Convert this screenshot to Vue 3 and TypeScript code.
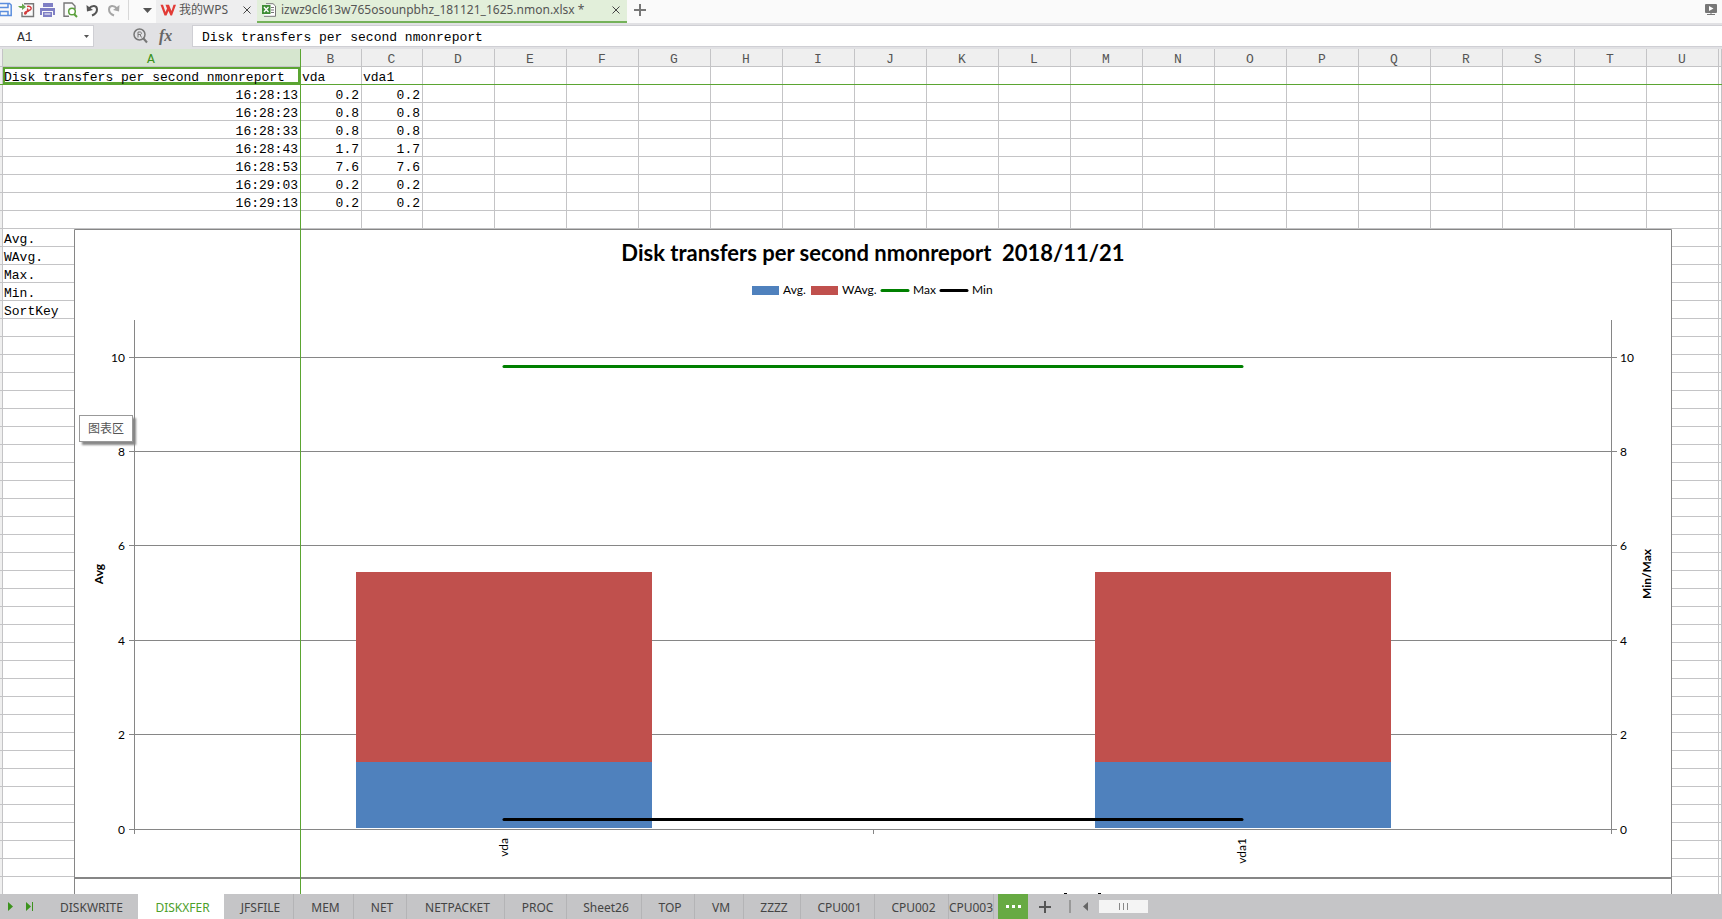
<script setup lang="ts">
import { ref } from 'vue'

type Row = string[]

const columns = 'ABCDEFGHIJKLMNOPQRSTU'.split('')
const title = 'Disk transfers per second nmonreport'
const formula = ref(title)
const cellName = ref('A1')

const data: Row[] = [
  [title, 'vda', 'vda1'],
  ['16:28:13', '0.2', '0.2'],
  ['16:28:23', '0.8', '0.8'],
  ['16:28:33', '0.8', '0.8'],
  ['16:28:43', '1.7', '1.7'],
  ['16:28:53', '7.6', '7.6'],
  ['16:29:03', '0.2', '0.2'],
  ['16:29:13', '0.2', '0.2'],
  [],
  ['Avg.'],
  ['WAvg.'],
  ['Max.'],
  ['Min.'],
  ['SortKey'],
]
const rows: Row[] = Array.from({ length: 46 }, (_, i) => data[i] ?? [])
const isNumber = (text: string | undefined) => !!text && /^\d/.test(text)

const sheets = ['DISKWRITE', 'DISKXFER', 'JFSFILE', 'MEM', 'NET', 'NETPACKET', 'PROC', 'Sheet26', 'TOP', 'VM', 'ZZZZ', 'CPU001', 'CPU002', 'CPU003']
const activeSheet = ref('DISKXFER')

// Value axis geometry inside the chart drawing
const ticks = [
  { value: 10, y: 128 },
  { value: 8, y: 222 },
  { value: 6, y: 316 },
  { value: 4, y: 411 },
  { value: 2, y: 505 },
  { value: 0, y: 600 },
]
const bars = [282, 1021]
</script>

<template>
  <div class="app">
    <header class="top">
      <div class="quick">
        <button aria-label="Save">
          <svg width="12" height="16" viewBox="0 0 12 16"><path d="M0 1.500H9.500L11.200 3V13.500H0M0 5.500H8V1.500M0 13V9.500H8V13" fill="none" stroke="#5b8ede" stroke-width="1.500" /></svg>
        </button>
        <button aria-label="Export PDF">
          <svg width="18" height="16" viewBox="0 0 18 16"><path d="M6 1.700H15.500V14.500H4V10" fill="none" stroke="#777" stroke-width="1.400" /><path d="M0 4H4V1.500L8 5L4 8V6H2Z" fill="#6aa84f" /><path d="M9 4.500C13 3.500 15 7 11 8.500C9 9.200 10 5 9.500 8C9 11 7 13 6.700 11.500C6.500 10 9 9 11 9" fill="none" stroke="#d23c3c" stroke-width="1.400" /></svg>
        </button>
        <button aria-label="Print">
          <svg width="16" height="16" viewBox="0 0 16 16"><path d="M3 1H13V5H3ZM0 6H15V13H13V9H2V13H0ZM3 10H12V15H3Z" fill="#7f7fc4" /><path d="M4.500 12H10.500" stroke="#fff" /></svg>
        </button>
        <button aria-label="Print preview">
          <svg width="15" height="16" viewBox="0 0 15 16"><path d="M6 14.300H1V1H9L12 4V7" fill="none" stroke="#777" stroke-width="1.400" /><circle cx="9" cy="9.500" r="3.300" fill="#fff" stroke="#5ba03c" stroke-width="1.500" /><path d="M11 12L14 15" stroke="#5ba03c" stroke-width="2" /></svg>
        </button>
        <button aria-label="Undo">
          <svg width="13" height="14" viewBox="0 0 13 14"><path d="M3 5.500C6 2 11 2 11 6.500C11 9.500 8.500 11.500 6 12.500" fill="none" stroke="#555" stroke-width="2" /><path d="M0.500 2L1 8.500L7 7Z" fill="#555" /></svg>
        </button>
        <button aria-label="Redo">
          <svg width="13" height="14" viewBox="0 0 13 14"><path d="M10 5.500C7 2 2 2 2 6.500C2 9.500 4.500 11.500 7 12.500" fill="none" stroke="#a6a6a6" stroke-width="2" /><path d="M12.500 2L12 8.500L6 7Z" fill="#a6a6a6" /></svg>
        </button>
        <span class="rule"></span>
        <button aria-label="Customize toolbar">
          <svg width="9" height="5" viewBox="0 0 9 5"><path d="M0 0H9L4.500 5Z" fill="#555" /></svg>
        </button>
      </div>
      <nav class="files" aria-label="Open files">
        <div class="file home">
          <svg width="16" height="12" viewBox="0 0 16 12"><path d="M0.500 0.800H3L5.500 8L7 4.500L5.500 0.800H9L11.500 7L13.500 0.800H16L12 11.500H10.500L8.500 7L6.500 11.500H4.500Z" fill="#e23b36" /></svg>
          <a href="#home">我的WPS</a>
          <button aria-label="Close 我的WPS"><svg width="8" height="8" viewBox="0 0 8 8"><path d="M0.500 0.500L7.500 7.500M7.500 0.500L0.500 7.500" stroke="#444" /></svg></button>
        </div>
        <div class="file current">
          <svg width="15" height="14" viewBox="0 0 15 14"><path d="M4 0.700H11L13.500 3V13.300H2" fill="#fff" stroke="#777" /><path d="M9 4.500H12M9 7H12M9 9.500H12" stroke="#777" /><rect y="2" width="8.500" height="9" fill="#3f8e35" /><path d="M2 4L6.500 9M6.500 4L2 9" stroke="#fff" stroke-width="1.300" /></svg>
          <a href="#file">izwz9cl613w765osounpbhz_181121_1625.nmon.xlsx *</a>
          <button aria-label="Close file"><svg width="8" height="8" viewBox="0 0 8 8"><path d="M0.500 0.500L7.500 7.500M7.500 0.500L0.500 7.500" stroke="#444" /></svg></button>
        </div>
        <button class="new" aria-label="New file"><svg width="12" height="12" viewBox="0 0 12 12"><path d="M6 0V12M0 6H12" stroke="#777" stroke-width="2" /></svg></button>
      </nav>
      <button class="present" aria-label="Present">
        <svg width="12" height="11" viewBox="0 0 12 11"><rect width="12" height="9" rx="1" fill="#777" /><path d="M4 2L8.500 4.500L4 7Z" fill="#fff" /><path d="M6 9V10M2 10.500H10" stroke="#777" /></svg>
      </button>
    </header>

    <div class="formula-bar">
      <div class="name-box">
        <input v-model="cellName" aria-label="Name box" />
        <button aria-label="Choose name"><svg width="5" height="3" viewBox="0 0 5 3"><path d="M0 0H5L2.500 3Z" fill="#555" /></svg></button>
      </div>
      <div class="tools">
        <button aria-label="Look up">
          <svg width="16" height="16" viewBox="0 0 16 16"><circle cx="6.500" cy="6.500" r="5.500" fill="none" stroke="#777" stroke-width="1.500" /><path d="M10.500 10.500L14 14.500" stroke="#777" stroke-width="2" /><path d="M5 9.500V4H7C9 4 9 6.500 7 6.500H5M7 6.500L8.500 9.500" fill="none" stroke="#777" /></svg>
        </button>
        <button class="fx" aria-label="Insert function">fx</button>
      </div>
      <input v-model="formula" class="formula" aria-label="Formula" />
    </div>

    <main class="sheet">
      <table>
        <colgroup>
          <col class="c-stub" />
          <col class="c-a" />
          <col class="c-b" />
          <col class="c-b" />
          <col v-for="c in columns.slice(3)" :key="c" class="c-d" />
          <col />
        </colgroup>
        <thead>
          <tr>
            <th></th>
            <th v-for="c in columns" :key="c" scope="col" :class="{ picked: c === 'A' }">{{ c }}</th>
            <th></th>
          </tr>
        </thead>
        <tbody>
          <tr v-for="(row, r) in rows" :key="r">
            <td class="stub"></td>
            <td v-for="(c, i) in columns" :key="c" :class="{ num: isNumber(row[i]), active: r === 0 && i === 0 }">{{ row[i] }}</td>
            <td></td>
          </tr>
        </tbody>
      </table>

      <svg class="chart" width="1598" height="665" viewBox="0 0 1598 665" role="img" aria-label="Disk transfers chart">
        <rect width="1598" height="665" fill="#fff" />
        <path d="M0.500 665V0.500H1597.500V665" class="line" />
        <path d="M0 649H1598" class="line edge" />
        <text x="799" y="32" class="title">Disk transfers per second nmonreport&nbsp; 2018/11/21</text>

        <rect x="678" y="57" width="27" height="9" fill="#4f81bd" />
        <text x="709" y="65">Avg.</text>
        <rect x="737" y="57" width="27" height="9" fill="#c0504d" />
        <text x="768" y="65">WAvg.</text>
        <path d="M808 61.500H834" class="max" />
        <text x="839" y="65">Max</text>
        <path d="M867 61.500H893" class="min" />
        <text x="898" y="65">Min</text>

        <g v-for="t in ticks" :key="t.value">
          <path :d="`M55 ${t.y}.5H1543`" class="line" />
          <text x="51" :y="t.y + 5" class="end">{{ t.value }}</text>
          <text x="1546" :y="t.y + 5">{{ t.value }}</text>
        </g>
        <path d="M60.500 91V605M1537.500 91V605M799.500 600V605" class="line" />
        <g v-for="x in bars" :key="x">
          <rect :x="x" y="343" width="296" height="190" fill="#c0504d" />
          <rect :x="x" y="533" width="296" height="66" fill="#4f81bd" />
        </g>
        <path d="M430 137.500H1168" class="max" />
        <path d="M430 590.500H1168" class="min" />
        <text transform="translate(434 609) rotate(-90)" class="end">vda</text>
        <text transform="translate(1172 609) rotate(-90)" class="end">vda1</text>
        <text transform="translate(29 345) rotate(-90)" class="axis">Avg</text>
        <text transform="translate(1577 345) rotate(-90)" class="axis">Min/Max</text>
        <path d="M990 664.500H993M1024 664.500H1027" stroke="#000" />
      </svg>
      <div class="freeze-x"></div>
      <div class="freeze-y"></div>
      <div class="tip" role="tooltip">图表区</div>
    </main>

    <footer class="bottom">
      <div class="steps">
        <button aria-label="Next sheet"><svg width="5" height="9" viewBox="0 0 5 9"><path d="M0 0L5 4.500L0 9Z" fill="#3c931d" /></svg></button>
        <button aria-label="Last sheet"><svg width="8" height="9" viewBox="0 0 8 9"><path d="M0 0L5 4.500L0 9ZM6 0H7V9H6Z" fill="#3c931d" /></svg></button>
      </div>
      <div class="sheets" role="tablist">
        <button v-for="s in sheets" :key="s" role="tab" :aria-selected="s === activeSheet" :class="{ on: s === activeSheet }" @click="activeSheet = s">{{ s }}</button>
      </div>
      <button class="more" aria-label="More sheets"><i></i><i></i><i></i></button>
      <button class="add" aria-label="Add sheet"><svg width="12" height="12" viewBox="0 0 12 12"><path d="M6 0V12M0 6H12" stroke="#555" stroke-width="2" /></svg></button>
      <span class="split"></span>
      <button class="back" aria-label="Scroll left"><svg width="5" height="9" viewBox="0 0 5 9"><path d="M5 0L0 4.500L5 9Z" fill="#666" /></svg></button>
      <div class="thumb"><i></i><i></i><i></i></div>
    </footer>
  </div>
</template>

<style>
body {
  margin: 0;
}
</style>

<style scoped>
.app {
  display: flex;
  flex-direction: column;
  height: 100vh;
  overflow: hidden;
  background: #fff;
  font-family: 'Noto Sans', 'Noto Sans CJK SC', sans-serif;
  font-size: 12px;
  color: #444;
}
button {
  display: flex;
  align-items: center;
  justify-content: center;
  margin: 0;
  padding: 0;
  border: 0;
  background: none;
  font: inherit;
  color: inherit;
}
input {
  min-width: 0;
  box-sizing: border-box;
  border: 0;
  padding: 2px 0 0;
  outline: 0;
  background: none;
  font: 13px 'Liberation Mono', monospace;
  color: #000;
}
svg {
  display: block;
  flex: none;
}
.top {
  display: flex;
  height: 23px;
  flex: none;
  background: #fafafa;
}
.quick {
  display: grid;
  grid-template-columns: 18px 22px 23px 23px 21px 21px 11px 17px;
  align-items: center;
  justify-items: start;
  flex: none;
  padding-bottom: 3px;
}
.quick button:last-child {
  justify-self: center;
}
.rule {
  width: 1px;
  height: 20px;
  background: #d8d8d8;
}
.files {
  display: flex;
  flex: 1;
}
.file {
  display: flex;
  align-items: center;
  box-sizing: border-box;
  padding-bottom: 3px;
}
.file a {
  flex: 1;
  color: #555;
  text-decoration: none;
  white-space: nowrap;
  line-height: 18px;
}
.home {
  width: 101px;
  gap: 3px;
  padding-left: 4px;
  padding-right: 6px;
  background: #eeeeef;
}
.current {
  width: 370px;
  gap: 4px;
  padding: 0 7px 1px 5px;
  border-bottom: 2px solid #75b25a;
  background: #e2efda;
}
.new {
  width: 26px;
  padding-bottom: 3px;
}
.present {
  width: 34px;
  padding-bottom: 4px;
  padding-left: 12px;
  box-sizing: border-box;
}
.formula-bar {
  display: flex;
  flex: none;
  height: 26px;
  box-sizing: border-box;
  padding: 2px 0;
  background: #e1e1e4;
}
.name-box {
  display: flex;
  width: 94px;
  box-sizing: border-box;
  padding: 0 4px 0 17px;
  border: 1px solid #cfcfd4;
  border-left: 0;
  background: #fff;
}
.name-box input {
  flex: 1;
  color: #333;
}
.tools {
  display: flex;
  width: 98px;
  box-sizing: border-box;
  padding-left: 39px;
  gap: 10px;
}
.fx {
  font: italic bold 16px 'Liberation Serif', serif;
  color: #666;
}
.formula {
  flex: 1;
  padding-left: 9px;
  border: 1px solid #cfcfd4;
  border-right: 0;
  background: #fff;
}
.sheet {
  position: relative;
  flex: 1;
  min-height: 0;
  overflow: hidden;
  color: #000;
}
table {
  width: 100%;
  table-layout: fixed;
  border-collapse: separate;
  border-spacing: 0;
  font: 13px/13px 'Liberation Mono', monospace;
}
.c-stub {
  width: 3px;
}
.c-a {
  width: 298px;
}
.c-b {
  width: 61px;
}
.c-d {
  width: 72px;
}
th,
td {
  box-sizing: border-box;
  height: 18px;
  padding: 4px 2px 0 1px;
  border: 0 solid #c4c4c6;
  border-width: 0 1px 1px 0;
  overflow: hidden;
  white-space: nowrap;
}
th {
  background: #efefef;
  color: #555;
  font-weight: normal;
  text-align: center;
}
th:first-child,
.stub {
  padding: 0;
}
.picked {
  background: #d6e6cf;
  color: #3c931d;
}
.stub {
  background: #efefef;
}
.num {
  text-align: right;
}
.active {
  box-shadow: inset 0 0 0 2px #5ba532;
}
.chart {
  position: absolute;
  left: 74px;
  top: 180px;
  font: 12px Lato, sans-serif;
  fill: #000;
}
.line {
  fill: none;
  stroke: #868686;
}
.edge {
  stroke-width: 2;
}
.title {
  font-size: 22px;
  font-weight: bold;
  text-anchor: middle;
}
.axis {
  font-weight: bold;
  text-anchor: middle;
}
.end {
  text-anchor: end;
}
.max,
.min {
  stroke: #008000;
  stroke-width: 3;
  stroke-linecap: round;
}
.min {
  stroke: #000;
}
.freeze-x {
  position: absolute;
  top: 35px;
  left: 0;
  right: 0;
  height: 1px;
  background: #5ba532;
}
.freeze-y {
  position: absolute;
  top: 0;
  bottom: 0;
  left: 300px;
  width: 1px;
  background: #5ba532;
}
.tip {
  position: absolute;
  left: 79px;
  top: 366px;
  padding: 0 8px;
  border: 1px solid #999;
  background: #fff;
  box-shadow: 3px 3px 2px #888;
  line-height: 25px;
  color: #555;
}
.bottom {
  display: flex;
  align-items: center;
  flex: none;
  height: 25px;
  background: #c5c5c7;
}
.steps {
  display: flex;
  gap: 13px;
  width: 46px;
  box-sizing: border-box;
  padding-left: 8px;
}
.sheets {
  display: grid;
  grid-template-columns: 92px 86px 70px 60px 53px 98px 62px 75px 53px 49px 57px 74px 74px 45px;
  height: 25px;
  margin-right: 4px;
}
.sheets button {
  border-right: 1px solid #b4b4b6;
  padding-left: 4px;
  padding-top: 2px;
  overflow: hidden;
}
.sheets button:first-child {
  border-color: transparent;
  padding-left: 0;
}
.sheets button:last-child {
  padding-left: 0;
}
.sheets .on {
  border-color: #fff;
  background: #fff;
  color: #4da02a;
}
.more {
  gap: 3px;
  width: 30px;
  height: 25px;
  background: #67aa43;
}
.more i {
  width: 3px;
  height: 3px;
  background: #fff;
}
.add {
  width: 34px;
}
.split {
  width: 2px;
  height: 13px;
  margin-left: 7px;
  background: #999;
}
.back {
  margin: 0 11px 0 12px;
}
.thumb {
  display: flex;
  align-items: center;
  justify-content: center;
  gap: 3px;
  width: 49px;
  height: 13px;
  background: #f4f4f4;
}
.thumb i {
  width: 1px;
  height: 7px;
  background: #888;
}
</style>
